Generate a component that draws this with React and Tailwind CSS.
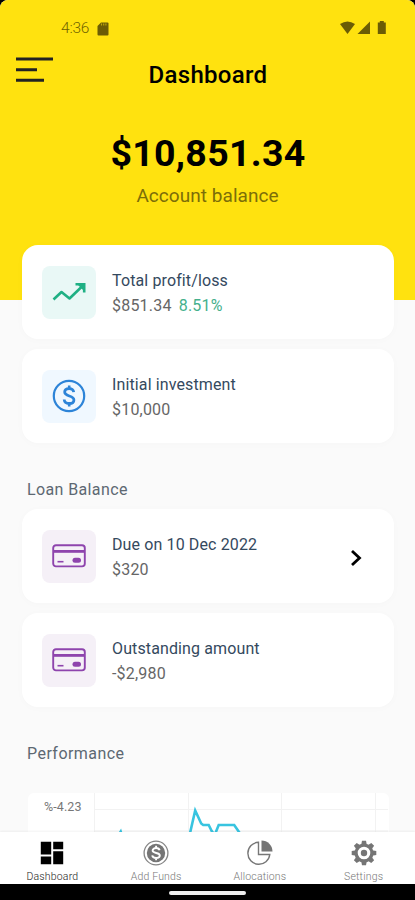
/**
 * Dashboard — account balance, loan balance and performance overview.
 */

import React from 'react'

function StatusBar() {
  return (
    <div className="flex h-[56px] justify-between pl-[61px] pr-[29px] text-[#6b5c05]">
      <div className="flex h-full items-center gap-[8px] pt-[1px]">
        <span className="text-[15.5px] font-light leading-none tracking-[-0.2px] text-[#6f6200]">4:36</span>
        <svg width="12" height="14" viewBox="0 0 12 14" fill="currentColor">
          <path d="M4 .5h6.500A1 1 0 0 1 11.500 1.500v11a1 1 0 0 1-1 1h-9a1 1 0 0 1-1-1V4z" />
          <path d="M4.500 1.500v2M6.700 1.500v2M8.900 1.500v2" stroke="#bda70b" strokeWidth="1.100" />
        </svg>
      </div>
      <svg className="mt-[20px]" width="46" height="15" viewBox="0 0 46 15" fill="currentColor">
        <path d="M0 4Q7.500-1 15 4L7.500 14z" />
        <path d="M30 1.500v12.500H17.500z" />
        <path d="M37.800 2.500h2V1h4v1.500h2V14h-8z" />
      </svg>
    </div>
  )
}

function TrendIcon() {
  return (
    <svg width="36" height="24" viewBox="0 0 36 24" fill="none" stroke="#1fb084" strokeWidth="2.600">
      <path d="M2.500 19.500l8-7.500 8 6.500L31.500 6" strokeLinejoin="round" />
      <path d="M24.500 4.300h8.700v8.200" />
      <path d="M27 5h6v6z" fill="#1fb084" stroke="none" />
    </svg>
  )
}

function DollarIcon() {
  return (
    <svg width="34" height="34" viewBox="0 0 34 34" fill="none" stroke="#2d84d8">
      <circle cx="17" cy="17" r="15.200" strokeWidth="2.200" />
      <path
        d="M21.700 13.200c-.3-2.400-2-3.600-4.600-3.600-2.700 0-4.400 1.400-4.400 3.500 0 5 9.200 2.800 9.200 7.800 0 2.200-1.900 3.600-4.700 3.600-3 0-4.800-1.400-5-4"
        strokeWidth="2.800"
      />
      <path d="M17.200 6.500v4M17.200 23.500v4" strokeWidth="2.600" />
    </svg>
  )
}

function CardIcon() {
  return (
    <svg width="34" height="24" viewBox="0 0 34 24" fill="none" stroke="#8e44ad">
      <rect x="1.200" y="1.200" width="31.600" height="21.200" rx="2.800" strokeWidth="1.900" />
      <path d="M1 7.400h32" strokeWidth="2.800" />
      <path d="M5.500 17.700h6" strokeWidth="1.600" />
      <rect x="20.500" y="13.700" width="8.500" height="5" rx="2.500" fill="#8e44ad" stroke="none" />
    </svg>
  )
}

function InfoCard({ icon, tint, title, children, arrow }) {
  return (
    <div className="flex h-[94px] items-center rounded-[16px] bg-white pl-[20px] pr-[31px] shadow-[0_1px_8px_rgba(0,0,0,0.02)]">
      <div className={`flex h-[53px] w-[54px] items-center justify-center rounded-[8px] ${tint}`}>{icon}</div>
      <div className="ml-[16px] flex-1 pt-[2px]">
        <div className="text-[16px] leading-[24px] tracking-[0.12px] text-[#34495e]">{title}</div>
        <div className="text-[16px] leading-[25px] tracking-[0.2px] text-[#666666]">{children}</div>
      </div>
      {arrow && (
        <svg className="mt-[3px]" width="14" height="18" viewBox="0 0 14 18" fill="none" stroke="#000" strokeWidth="2.800">
          <path d="M3 2l7.500 7L3 16" />
        </svg>
      )}
    </div>
  )
}

function Chart() {
  return (
    <div className="ml-[6px] flex h-[60px] w-[361px] rounded-t-[6px] bg-white">
      <div className="w-[66px] pl-[16px] pt-[6px] text-[12.500px] leading-[16px] tracking-[0.1px] text-[#777]">%-4.23</div>
      <svg width="295" height="60" viewBox="94 793 295 60" fill="none">
        <path d="M94.500 793v60M188.500 793v60M281.500 793v60M375.500 793v60M94 809.500h294M94 831h294" stroke="#f2f2f2" />
        <path
          d="M118.500 835l2.200-3.500 2.500 8 59 12 7.500-17 5.500-24 6 13 2 1.500h5.500l3 6 3 4 4-10h15.500l5.500 8"
          stroke="#38c4e0"
          strokeWidth="2.600"
        />
      </svg>
    </div>
  )
}

function GearIcon() {
  const teeth = [0, 45, 90, 135, 180, 225, 270, 315]
  return (
    <svg width="26" height="26" viewBox="-13 -13 26 26" fill="#757575">
      {teeth.map((angle) => (
        <path key={angle} d="M-2.800-8l.8-4.300h4L2.800-8z" transform={`rotate(${angle})`} />
      ))}
      <circle r="7.900" fill="none" stroke="#757575" strokeWidth="3.200" />
      <circle r="3.200" />
    </svg>
  )
}

const tabs = [
  {
    label: 'Dashboard',
    active: true,
    icon: (
      <svg width="24" height="24" viewBox="0 0 24 24" fill="#000">
        <path d="M.8.8h10.400v12.700H.8zM13.200.8h10v7.400h-10zM.8 15.600h10.400v7.600H.8zM13.200 10.300h10v12.900h-10z" />
      </svg>
    ),
  },
  {
    label: 'Add Funds',
    icon: (
      <svg width="26" height="26" viewBox="0 0 26 26" fill="none">
        <circle cx="13" cy="13" r="11.900" stroke="#858585" strokeWidth="1.300" />
        <circle cx="13" cy="13" r="9.200" fill="#757575" />
        <path
          d="M16.600 10.300c-.3-1.500-1.500-2.300-3.500-2.300s-3.500 1-3.500 2.500c0 3.400 7.200 1.600 7.200 5 0 1.600-1.600 2.500-3.700 2.500s-3.600-.8-3.900-2.600M13.100 5.800v2.500M13.100 17.700v2.600"
          stroke="#fff"
          strokeWidth="1.900"
        />
      </svg>
    ),
  },
  {
    label: 'Allocations',
    icon: (
      <svg width="26" height="26" viewBox="0 0 26 26" fill="none">
        <path d="M11.500 2.300A11 11 0 1 0 22.800 14.500H11.500z" stroke="#777" strokeWidth="1.400" />
        <path d="M14.500.5A11 11 0 0 1 25.500 11.500h-11z" fill="#757575" />
      </svg>
    ),
  },
  { label: 'Settings', icon: <GearIcon /> },
]

export default function App() {
  return (
    <div className="h-[900px] w-[415px] overflow-hidden bg-black font-['Roboto',sans-serif]">
      <div className="flex h-[884px] flex-col overflow-hidden rounded-t-[8px] bg-[#fafafa]">
        <main className="min-h-0 flex-1 overflow-hidden">
          <header className="h-[300px] bg-[#ffe20f]">
            <StatusBar />
            <div className="grid h-[39px] grid-cols-[1fr_auto_1fr] pl-[16px] pr-[15px]">
              <svg width="37" height="28" viewBox="0 0 37 28" fill="none" stroke="#222" strokeWidth="3">
                <path d="M0 3h37M0 13.700h21M0 24.200h28" />
              </svg>
              <h1 className="text-[24px] font-medium leading-[38px] tracking-[0.3px] text-black">Dashboard</h1>
            </div>
            <div className="mt-[35px] pl-[1px] text-center text-[37.500px] font-bold leading-[46px] tracking-[0.300px] text-black">
              $10,851.34
            </div>
            <div className="mt-[9px] text-center text-[19px] leading-[22px] tracking-[0.05px] text-[#7c6e08]">
              Account balance
            </div>
          </header>

          <div className="relative -mt-[55px] pl-[22px] pr-[21px]">
            <div className="flex flex-col gap-[10px]">
              <InfoCard icon={<TrendIcon />} tint="bg-[#e9f8f6]" title="Total profit/loss">
                $851.34 <span className="ml-[3px] text-[#45b08c]">8.51%</span>
              </InfoCard>
              <InfoCard icon={<DollarIcon />} tint="bg-[#f0f8ff]" title="Initial investment">
                $10,000
              </InfoCard>
            </div>

            <h2 className="mb-[9px] mt-[37px] pl-[5px] text-[16px] leading-[20px] tracking-[0.38px] text-[#5d6872]">
              Loan Balance
            </h2>
            <div className="flex flex-col gap-[10px]">
              <InfoCard icon={<CardIcon />} tint="bg-[#f5f0f7]" title="Due on 10 Dec 2022" arrow>
                $320
              </InfoCard>
              <InfoCard icon={<CardIcon />} tint="bg-[#f5f0f7]" title="Outstanding amount">
                -$2,980
              </InfoCard>
            </div>

            <h2 className="mb-[29px] mt-[37px] pl-[5px] text-[16px] leading-[20px] tracking-[0.45px] text-[#5d6872]">
              Performance
            </h2>
            <Chart />
          </div>
        </main>

        <nav className="relative grid h-[52px] shrink-0 grid-cols-4 bg-white shadow-[0_-1px_2px_rgba(0,0,0,0.05)]">
          {tabs.map((tab) => (
            <div key={tab.label} className="flex flex-col items-center pl-[1px] pt-[8px]">
              <div className="flex h-[26px] items-center">{tab.icon}</div>
              <span
                className={`mt-[4px] text-[10.500px] font-light leading-[14px] tracking-[0.18px] ${
                  tab.active ? 'text-[#222]' : 'text-[#777]'
                }`}
              >
                {tab.label}
              </span>
            </div>
          ))}
        </nav>
      </div>
      <div className="flex h-[16px] justify-center pt-[7px]">
        <div className="h-[4px] w-[77px] rounded-full bg-[#eee]" />
      </div>
    </div>
  )
}
